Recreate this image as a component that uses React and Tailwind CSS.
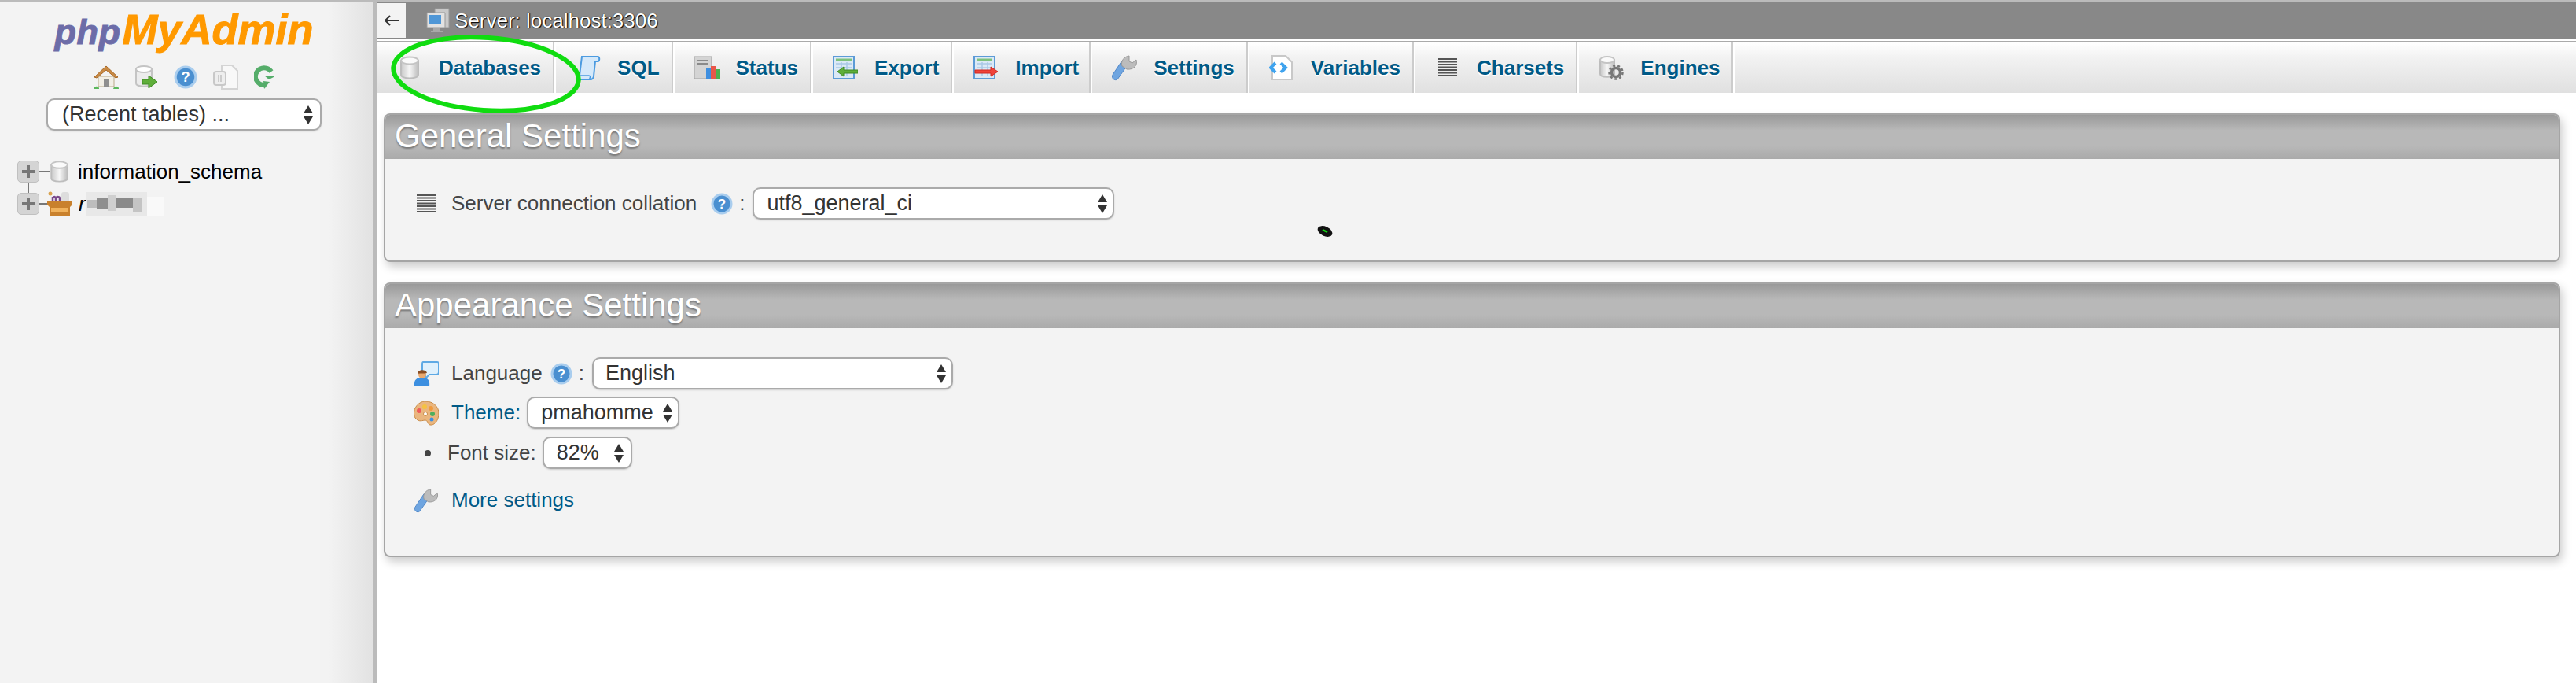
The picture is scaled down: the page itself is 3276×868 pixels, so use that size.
import React from 'react';

const HelpIcon = ({ size = 28 }) => (
  <svg width={size} height={size} viewBox="0 0 28 28" className="shrink-0">
    <circle cx="14" cy="14" r="13.5" fill="#a9cdee" />
    <circle cx="14" cy="14" r="10.5" fill="#4a8fd0" />
    <text x="14" y="20" textAnchor="middle" fontSize="17" fontWeight="700" fontFamily="Liberation Sans" fill="#fff">?</text>
  </svg>
);

const Cylinder = ({ w = 26, h = 30 }) => (
  <svg width={w} height={h} viewBox="0 0 26 30">
    <defs>
      <linearGradient id="cyl">
        <stop offset="0" stopColor="#c8c8c8" />
        <stop offset="0.5" stopColor="#f6f6f6" />
        <stop offset="1" stopColor="#bdbdbd" />
      </linearGradient>
    </defs>
    <path d="M2 6v18c0 6 22 6 22 0V6z" fill="url(#cyl)" stroke="#bdbdbd" strokeWidth="2" />
    <ellipse cx="13" cy="6" rx="11" ry="4.5" fill="#fafafa" stroke="#c4c4c4" strokeWidth="2" />
  </svg>
);

const HomeIcon = () => (
  <svg width="32" height="32" viewBox="0 0 32 32">
    <path d="M6 15h20v13H6z" fill="#f2efe6" stroke="#b9a98a" />
    <path d="M13 19h6v9h-6z" fill="#8f8f8f" />
    <path d="M1 16 16 2l15 14-3 1L16 7 4 17z" fill="#c98a45" stroke="#a86a2a" />
    <path d="M0 31c1-4 6-4 7-1v1zM25 31c1-4 6-4 7-1v1z" fill="#5cb85c" />
  </svg>
);

const GoDbIcon = () => (
  <svg width="30" height="32" viewBox="0 0 30 32">
    <path d="M2 6v18c0 5 20 5 20 0V6z" fill="#ececec" stroke="#c4c4c4" strokeWidth="2" />
    <ellipse cx="12" cy="6" rx="10" ry="4" fill="#fff" stroke="#c4c4c4" strokeWidth="2" />
    <path d="M10 19h8v-5l11 8-11 8v-5h-8z" fill="#5fae3a" stroke="#3f8a24" />
  </svg>
);

const CopyIcon = () => (
  <svg width="32" height="32" viewBox="0 0 32 32">
    <path d="M11 1h13l7 7v23H11z" fill="#f8f8f8" stroke="#d4d4d4" strokeWidth="2" />
    <rect x="1" y="9" width="15" height="17" rx="3" fill="#eee" stroke="#c8c8c8" strokeWidth="2" />
    <path d="M7 13v9M10 13v9" stroke="#ccc" strokeWidth="2" />
  </svg>
);

const ReloadIcon = () => (
  <svg width="26" height="32" viewBox="0 0 26 32">
    <path d="M22 9A11 11 0 1 0 15 26" fill="none" stroke="#55ad6a" strokeWidth="6" />
    <path d="M13 14h12v2l-6 3zM12 21l8 1-7 9z" fill="#55ad6a" />
  </svg>
);

const PlusBox = () => (
  <div className="w-[28px] h-[28px] rounded-[5px] bg-[#d4d4d4] border border-[#c0c0c0] flex items-center justify-center shrink-0">
    <svg width="16" height="16" viewBox="0 0 16 16">
      <path d="M8 0v16M0 8h16" stroke="#777" strokeWidth="4" />
    </svg>
  </div>
);

const CrateIcon = () => (
  <svg width="32" height="32" viewBox="0 0 32 32">
    <rect x="18" y="1" width="10" height="15" rx="3" fill="#ddd" />
    <path d="M4 16V6h14v10" fill="#eee" />
    <path d="M7 15V7m0 2c2-3 4-2 4 0v6m0-6c2-3 5-2 5 0v6" fill="none" stroke="#7a4a8c" strokeWidth="2.5" />
    <circle cx="4" cy="3" r="2.5" fill="#d8a24f" />
    <path d="M0 12h32v5l-3 3v11H3V20l-3-3z" fill="#c9812d" />
    <path d="M5 21h22v5H5z" fill="#f0b25c" />
  </svg>
);

const ServerIcon = () => (
  <svg width="32" height="32" viewBox="0 0 32 32">
    <path d="M12 1h18v24H12z" fill="#c9c9c9" stroke="#999" />
    <path d="M2 6h23v19H2z" fill="#e2e2e2" stroke="#999" />
    <path d="M5 9h15v12H5z" fill="#4f97d7" />
    <path d="M10 25h8v4h4v2H7v-2h3z" fill="#a8a8a8" />
  </svg>
);

const ScrollIcon = () => (
  <svg width="32" height="32" viewBox="0 0 32 32">
    <path d="M8 2h20c3 0 3 6 0 6h-3l-2 19c0 2-2 4-4 4H3c-3 0-3-5 0-5h2z" fill="#d5e9fa" stroke="#4c9be0" strokeWidth="2" />
    <path d="M3 26h14c2 0 2 3 0 5" fill="none" stroke="#4c9be0" strokeWidth="1.5" />
  </svg>
);

const StatusIcon = () => (
  <svg width="34" height="30" viewBox="0 0 34 30">
    <path d="M1 1h22v28H1z" fill="#d4d4d4" stroke="#a0a0a0" />
    <path d="M5 6h14M5 10h14" stroke="#8a8a8a" strokeWidth="2" />
    <path d="M16 15h6v15h-6z" fill="#3f8fe0" />
    <path d="M22 13h6v17h-6z" fill="#e8574a" />
    <path d="M28 17h6v13h-6z" fill="#4cb050" />
  </svg>
);

// table sheet with a thin arrow across its lower half
const TableArrow = ({ color, edge, flip }) => (
  <svg width="32" height="30" viewBox="0 0 32 30">
    <rect x="1" y="1" width="26" height="28" fill="#dbe9f6" stroke="#5c9bd6" strokeWidth="2" />
    <path d="M4 5h20" stroke="#7ec27e" strokeWidth="3" />
    <path d="M4 10h20M4 15h20M11 8v18M18 8v18" stroke="#a9c9e6" strokeWidth="1.5" />
    <path d={flip ? 'M32 18H14v-4l-8 6 8 6v-4h18z' : 'M2 18h20v-4l9 6-9 6v-4H2z'} fill={color} stroke={edge} />
  </svg>
);

const WrenchIcon = () => (
  <svg width="34" height="34" viewBox="0 0 34 34">
    <path d="M22 12 8 32c-3 2-8-1-6-6l12-18z" fill="#6fa5e0" stroke="#4e86c8" />
    <path d="M14 15c-2-6 2-12 9-13v7l4 2 5-4c2 7-3 13-12 12z" fill="#bcbcbc" stroke="#999" />
  </svg>
);

const VariablesIcon = () => (
  <svg width="32" height="32" viewBox="0 0 32 32">
    <path d="M4 1h17l8 8v22H4z" fill="#fff" stroke="#c8c8c8" strokeWidth="2" />
    <path d="M8 10 2 16l6 6" fill="none" stroke="#3fa3ee" strokeWidth="4" />
    <path d="m15 10 6 6-6 6" fill="none" stroke="#3fa3ee" strokeWidth="4" />
  </svg>
);

const CharsetIcon = () => (
  <svg width="24" height="24" viewBox="0 0 24 24">
    <path d="M0 1h24M0 4.500h24M0 8h24M0 11.500h24M0 15h24M0 18.500h24M0 22h24" stroke="#555" strokeWidth="2" />
  </svg>
);

const EnginesIcon = () => (
  <svg width="34" height="32" viewBox="0 0 34 32">
    <path d="M3 6v18c0 5 18 5 18 0V6z" fill="url(#cyl)" stroke="#bdbdbd" strokeWidth="2" />
    <ellipse cx="12" cy="6" rx="9" ry="4" fill="#fafafa" stroke="#c4c4c4" strokeWidth="2" />
    <circle cx="23" cy="22" r="5.500" fill="none" stroke="#777" strokeWidth="3.500" />
    <circle cx="23" cy="22" r="8.500" fill="none" stroke="#777" strokeWidth="2.500" strokeDasharray="3 3" />
  </svg>
);

const LanguageIcon = () => (
  <svg width="32" height="32" viewBox="0 0 32 32">
    <path d="M12 1h18c2 0 2 1 2 3v10c0 2-1 3-3 3h-9l-5 5v-5c-3 0-4-1-4-3V4c0-2 0-3 1-3z" fill="#dff0fc" stroke="#5ea9e4" strokeWidth="2" />
    <circle cx="11" cy="17" r="5" fill="#e9a96f" />
    <path d="M5 16c0-6 11-6 12-1-4 1-8 0-12 1z" fill="#8a4d22" />
    <path d="M1 32c-1-9 3-11 10-11s10 3 9 11z" fill="#3c8fe0" />
  </svg>
);

const PaletteIcon = () => (
  <svg width="32" height="32" viewBox="0 0 32 32">
    <path d="M15 1c10 0 17 7 17 15 0 10-6 16-11 15-4-1-2-6-7-6-5 1-8 2-12-3C-3 13 5 1 15 1z" fill="#eab67e" stroke="#c98a45" />
    <circle cx="7" cy="13" r="3" fill="#ee5b5b" />
    <circle cx="14" cy="8" r="3" fill="#f5c242" />
    <circle cx="22" cy="10" r="3" fill="#f09a3e" />
    <circle cx="24" cy="17" r="3" fill="#4fae5d" />
    <circle cx="23" cy="24" r="2.500" fill="#3f8fe0" />
    <circle cx="15" cy="17" r="2.500" fill="#fff" stroke="#c98a45" />
  </svg>
);

const Arrows = () => (
  <svg width="12" height="24" viewBox="0 0 12 24" className="shrink-0">
    <path d="M6 0l6 10H0zM6 24 0 14h12z" fill="#333" />
  </svg>
);

const Select = ({ label, className }) => (
  <div className={`flex items-center justify-between h-[41px] bg-white border-2 border-[#aaa] rounded-[10px] shadow-[0_1px_2px_#ccc] text-[#333] text-[27px] ${className}`}>
    <span>{label}</span>
    <Arrows />
  </div>
);

const TABS = [
  { label: 'Databases', icon: <Cylinder />, pad: 'pr-[17px]' },
  { label: 'SQL', icon: <ScrollIcon />, pad: 'pr-[17px]' },
  { label: 'Status', icon: <StatusIcon />, pad: 'pr-[17px]' },
  { label: 'Export', icon: <TableArrow color="#5fae3a" edge="#3f8a24" flip />, pad: 'pr-[17px]' },
  { label: 'Import', icon: <TableArrow color="#f0433a" edge="#d02a22" />, pad: 'pr-[15px]' },
  { label: 'Settings', icon: <WrenchIcon />, pad: 'pr-[17px]' },
  { label: 'Variables', icon: <VariablesIcon />, pad: 'pr-[17px]' },
  { label: 'Charsets', icon: <CharsetIcon />, pad: 'pr-[17px]' },
  { label: 'Engines', icon: <EnginesIcon />, pad: 'pr-[17px]' },
];

const Panel = ({ title, children }) => (
  <div className="bg-[#f3f3f3] border-2 border-[#a5a5a5] rounded-[8px] shadow-[3px_6px_12px_#ccc]">
    <div className="h-[56px] rounded-t-[6px] px-[12px] bg-[linear-gradient(#999,#b8b8b8_35%,#b8b8b8_70%,#aaa)] text-[42px] leading-[54px] text-white [text-shadow:0_2px_2px_#777]">
      {title}
    </div>
    {children}
  </div>
);

const Row = ({ icon, children, className = '' }) => (
  <div className={`flex items-center ${className}`}>
    <div className="w-[32px] flex justify-center shrink-0 mr-[16px]">{icon}</div>
    {children}
  </div>
);

const Sidebar = () => (
  <aside className="w-[480px] shrink-0 flex flex-col border-r-[6px] border-[#bbb] bg-[linear-gradient(90deg,#f3f3f3_88%,#e2e2e2)]">
    <div className="w-[468px] flex flex-col items-center">
      <div className="mt-[4px] h-[62px] flex items-baseline italic font-bold leading-[62px]">
        <span className="text-[45px] text-[#6c6ca8] tracking-[0.5px] [-webkit-text-stroke:1px_#6c6ca8]">php</span>
        <span className="text-[54px] text-[#ff9900] ml-[2px] [-webkit-text-stroke:1px_#ff9900]">MyAdmin</span>
      </div>
      <div className="mt-[14px] h-[32px] flex items-center gap-[20px]">
        <HomeIcon />
        <GoDbIcon />
        <HelpIcon size={30} />
        <CopyIcon />
        <ReloadIcon />
      </div>
      <Select label="(Recent tables) ..." className="mt-[11px] w-[350px] pl-[18px] pr-[9px]" />
    </div>
    <div className="mt-[38px] pl-[22px]">
      <div className="flex items-center h-[28px]">
        <PlusBox />
        <div className="w-[13px] h-[2px] bg-[#777]" />
        <Cylinder w={25} h={28} />
        <span className="ml-[11px] text-black">information_schema</span>
      </div>
      <div className="ml-[13px] w-[2px] h-[13px] bg-[#777]" />
      <div className="flex items-center h-[28px]">
        <PlusBox />
        <div className="w-[10px] h-[2px] bg-[#777]" />
        <CrateIcon />
        <span className="ml-[8px] italic text-black">r</span>
        {/* pixelated name, blurred out in the original */}
        <svg width="110" height="30" viewBox="0 0 110 30">
          <rect x="0" y="0" width="78" height="30" fill="#e8e8e8" />
          <rect x="78" y="6" width="22" height="24" fill="#f9f9f9" />
          <rect x="2" y="10" width="12" height="10" fill="#bdbdbd" />
          <rect x="14" y="8" width="14" height="14" fill="#8f8f8f" />
          <rect x="28" y="4" width="10" height="20" fill="#cfcfcf" />
          <rect x="38" y="8" width="22" height="12" fill="#8a8a8a" />
          <rect x="60" y="8" width="12" height="18" fill="#c4c4c4" />
        </svg>
      </div>
    </div>
  </aside>
);

export default function App() {
  return (
    <div className="relative w-full h-[868px] overflow-hidden flex bg-white border-t-2 border-[#bbb] font-[family-name:'Liberation_Sans',Arial,sans-serif] text-[26px] text-[#444]">
      <Sidebar />
      <main className="flex-1 min-w-0">
        <div className="h-[48px] bg-[#888] flex items-center">
          <div className="w-[36px] h-[44px] bg-[#f3f3f3] flex items-center justify-center text-[#333]">
            <svg width="18" height="14" viewBox="0 0 18 14">
              <path d="M18 7H2M7 1 1 7l6 6" fill="none" stroke="#333" strokeWidth="2" />
            </svg>
          </div>
          <div className="ml-[25px]"><ServerIcon /></div>
          <span className="ml-[5px] text-white [text-shadow:1px_1px_1px_#000,0_0_1px_#000]">Server: localhost:3306</span>
        </div>
        <div className="h-[2px] bg-white" />
        <div className="h-[2px] bg-[#aaa]" />
        <nav className="h-[64px] flex bg-[linear-gradient(#fff,#f2f2f2_30%,#e0e0e0)] font-bold text-[#005a87]">
          {TABS.map((tab) => (
            <div key={tab.label} className={`flex items-center pl-[24px] border-r-2 border-white shadow-[inset_-2px_0_0_#ccc] [text-shadow:0_2px_0_#fff] ${tab.pad}`}>
              <div className="w-[34px] flex justify-center mr-[20px]">{tab.icon}</div>
              {tab.label}
            </div>
          ))}
        </nav>
        <div className="pl-[8px] pr-[20px] pt-[26px] flex flex-col gap-[26px]">
          <Panel title="General Settings">
            <div className="pl-[36px] pt-[36px] pb-[52px]">
              <Row icon={<CharsetIcon />}>
                Server connection collation
                <span className="ml-[18px]"><HelpIcon /></span>
                <span className="ml-[8px] mr-[10px]">:</span>
                <Select label="utf8_general_ci" className="w-[460px] pl-[16px] pr-[7px]" />
              </Row>
            </div>
          </Panel>
          <Panel title="Appearance Settings">
            <div className="pl-[36px] pt-[37px] pb-[51px]">
              <Row icon={<LanguageIcon />}>
                Language
                <span className="ml-[10px]"><HelpIcon /></span>
                <span className="ml-[8px] mr-[10px]">:</span>
                <Select label="English" className="w-[459px] pl-[15px] pr-[7px]" />
              </Row>
              <Row icon={<PaletteIcon />} className="mt-[9px]">
                <span className="text-[#005a87]">Theme:</span>
                <Select label="pmahomme" className="ml-[8px] w-[194px] pl-[16px] pr-[7px]" />
              </Row>
              <div className="mt-[10px] flex items-center">
                <div className="ml-[14px] w-[8px] h-[8px] rounded-full bg-[#444]" />
                <span className="ml-[21px]">Font size:</span>
                <Select label="82%" className="ml-[8px] w-[114px] pl-[16px] pr-[9px]" />
              </div>
              <Row icon={<WrenchIcon />} className="mt-[20px]">
                <span className="text-[#005a87]">More settings</span>
              </Row>
            </div>
          </Panel>
        </div>
      </main>

      {/* annotation drawn over the screenshot */}
      <svg width="260" height="112" viewBox="0 0 260 112" className="absolute left-[494px] top-[36px]">
        <ellipse cx="124" cy="56" rx="118" ry="46" transform="rotate(4 124 56)" fill="none" stroke="#10dc10" strokeWidth="6" />
      </svg>
      <svg width="26" height="22" viewBox="0 0 26 22" className="absolute left-[1672px] top-[281px]">
        <ellipse cx="13" cy="11" rx="10" ry="6" transform="rotate(25 13 11)" fill="#111" />
        <path d="M10 9l6 3" stroke="#16d616" strokeWidth="2.5" />
      </svg>
    </div>
  );
}
